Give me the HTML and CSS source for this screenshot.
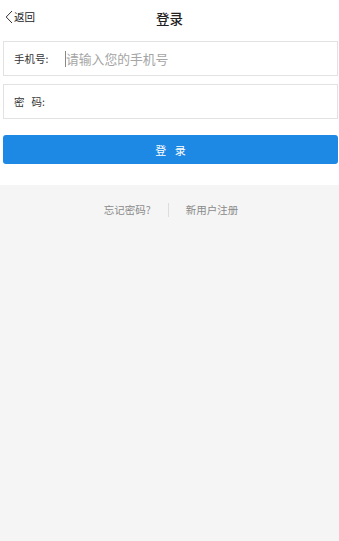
FILE: index.html
```html
<!DOCTYPE html>
<html>
<head>
    <meta charset="utf-8">
    <title>登录</title>
    <link rel="stylesheet" href="styles.css">
</head>
<body>
    <div class="header">
        <a class="back" href="#">
            <svg width="8" height="14" viewBox="0 0 8 14"><path d="M7 1 L1.2 7 L7 13" fill="none" stroke="#333" stroke-width="1"/></svg>
            <span>返回</span>
        </a>
        <div class="title">登录</div>
    </div>

    <div class="form">
        <div class="field">
            <label>手机号:</label>
            <span class="cursor"></span>
            <span class="placeholder">请输入您的手机号</span>
        </div>
        <div class="field">
            <label>密&nbsp;&nbsp;&nbsp;码:</label>
        </div>
        <button class="login-btn">登 录</button>
    </div>

    <div class="footer">
        <div class="links">
            <a href="#">忘记密码?</a>
            <span class="sep"></span>
            <a href="#">新用户注册</a>
        </div>
    </div>
</body>
</html>
```

FILE: styles.css
```css
html, body {
    height: 100%;
}
body {
    margin: 0;
    font-family: "Noto Sans CJK SC", "Liberation Sans", sans-serif;
    background: #fff;
    display: flex;
    flex-direction: column;
}
.header {
    height: 34px;
    display: flex;
    align-items: center;
    justify-content: center;
    position: relative;
}
.back {
    position: absolute;
    left: 5px;
    top: 9px;
    display: flex;
    align-items: center;
    gap: 1px;
    color: #222;
    text-decoration: none;
    font-size: 10.5px;
}
.title {
    font-size: 13.5px;
    color: #222;
    font-weight: 500;
    padding-top: 1px;
}
.form {
    padding: 7px 1px 0 3px;
}
.field {
    height: 33px;
    border: 1px solid #e2e2e2;
    display: flex;
    align-items: center;
    padding-left: 10px;
    margin-bottom: 8px;
}
.field label {
    font-size: 10.5px;
    color: #333;
    width: 51px;
}
.cursor {
    width: 1px;
    height: 16px;
    background: #888;
}
.placeholder {
    font-size: 12.8px;
    color: #a5a5a5;
}
.login-btn {
    display: block;
    width: 100%;
    height: 29px;
    margin-top: 16px;
    border: none;
    border-radius: 3px;
    background: #1e88e5;
    color: #fff;
    font-family: inherit;
    font-size: 11px;
    letter-spacing: 3px;
    text-indent: 3px;
}
.footer {
    flex: 1;
    margin-top: 21px;
    background: #f5f5f5;
}
.links {
    display: flex;
    justify-content: center;
    align-items: center;
    padding-top: 17px;
    gap: 17px;
    padding-left: 3px;
}
.links a {
    font-size: 10.5px;
    color: #8a8a8a;
    text-decoration: none;
}
.sep {
    width: 1px;
    height: 14px;
    background: #ddd;
}
```
